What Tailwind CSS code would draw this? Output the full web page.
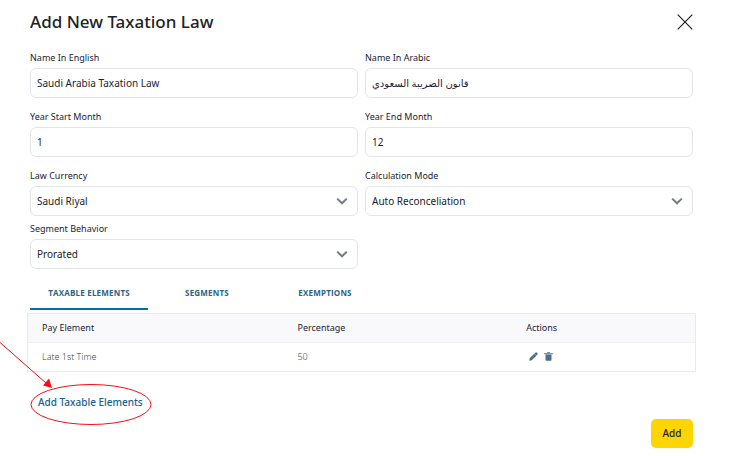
<!DOCTYPE html>
<html lang="en">
<head>
<meta charset="utf-8">
<meta name="viewport" content="width=device-width, initial-scale=1">
<title>Add New Taxation Law</title>
<script src="https://cdn.jsdelivr.net/npm/@tailwindcss/browser@4"></script>
</head>
<body class="bg-white font-['Noto_Sans','Open_Sans','DejaVu_Sans',sans-serif] text-[10px] text-[#1c1c34]">
<main class="overflow-hidden pt-2 pr-10 pb-2 pl-[30px]">
  <header class="flex h-7 items-center justify-between">
    <h1 class="text-[17px] leading-7 font-medium text-[#222]">Add New Taxation Law</h1>
    <button type="button" aria-label="Close" class="text-[#222]">
      <svg class="block size-4" viewBox="0 0 16 16" fill="none" stroke="currentColor" stroke-width="1.2"><path d="M.7.7l14.6 14.6M15.3.7L.7 15.3"/></svg>
    </button>
  </header>

  <form>
    <div class="mt-3 grid grid-cols-2 gap-x-[7px] gap-y-[9px]">
      <div>
        <label for="name-en" class="block text-[9px] leading-5">Name In English</label>
        <input id="name-en" type="text" value="Saudi Arabia Taxation Law" class="block h-[30px] w-full rounded-md border border-[#e2e5e8] px-1.5">
      </div>
      <div>
        <label for="name-ar" class="block text-[9px] leading-5">Name In Arabic</label>
        <input id="name-ar" type="text" value="قانون الضريبة السعودي" class="block h-[30px] w-full rounded-md border border-[#e2e5e8] px-1.5">
      </div>
      <div>
        <label for="start" class="block text-[9px] leading-5">Year Start Month</label>
        <input id="start" type="text" value="1" class="block h-[30px] w-full rounded-md border border-[#e2e5e8] px-1.5">
      </div>
      <div>
        <label for="end" class="block text-[9px] leading-5">Year End Month</label>
        <input id="end" type="text" value="12" class="block h-[30px] w-full rounded-md border border-[#e2e5e8] px-1.5">
      </div>
    </div>
    <div class="mt-[9px] grid grid-cols-2 gap-x-[7px] gap-y-[3px]">
      <div>
        <label for="currency" class="block text-[9px] leading-5">Law Currency</label>
        <div class="relative">
          <select id="currency" class="block h-[30px] w-full appearance-none rounded-md border border-[#e2e5e8] px-1.5 text-[#222]"><option>Saudi Riyal</option></select>
          <svg class="pointer-events-none absolute top-2.5 right-2.5 h-2.5 w-3" viewBox="0 0 12 10" fill="none" stroke="#757b83" stroke-width="2"><path d="M1.2 2.6L6 7.3l4.800-4.700"/></svg>
        </div>
      </div>
      <div>
        <label for="mode" class="block text-[9px] leading-5">Calculation Mode</label>
        <div class="relative">
          <select id="mode" class="block h-[30px] w-full appearance-none rounded-md border border-[#e2e5e8] px-1.5 text-[#222]"><option>Auto Reconceliation</option></select>
          <svg class="pointer-events-none absolute top-2.5 right-2.5 h-2.5 w-3" viewBox="0 0 12 10" fill="none" stroke="#757b83" stroke-width="2"><path d="M1.2 2.6L6 7.3l4.800-4.700"/></svg>
        </div>
      </div>
      <div>
        <label for="segment" class="block text-[9px] leading-5">Segment Behavior</label>
        <div class="relative">
          <select id="segment" class="block h-[30px] w-full appearance-none rounded-md border border-[#e2e5e8] px-1.5 text-[#222]"><option>Prorated</option></select>
          <svg class="pointer-events-none absolute top-2.5 right-2.5 h-2.5 w-3" viewBox="0 0 12 10" fill="none" stroke="#757b83" stroke-width="2"><path d="M1.2 2.6L6 7.3l4.800-4.700"/></svg>
        </div>
      </div>
    </div>

    <div role="tablist" class="mt-[9px] flex font-['Open_Sans','Noto_Sans',sans-serif] text-[8px] font-bold text-[#2a6384]">
      <button type="button" role="tab" aria-selected="true" class="h-8 w-[118px] border-b-2 border-[#04709c] tracking-wide">TAXABLE ELEMENTS</button>
      <button type="button" role="tab" aria-selected="false" class="h-8 w-[118px] border-b-2 border-transparent tracking-wide">SEGMENTS</button>
      <button type="button" role="tab" aria-selected="false" class="h-8 w-[118px] border-b-2 border-transparent tracking-wide">EXEMPTIONS</button>
    </div>

    <div class="-mx-[3px] mt-[3px] border border-[#e8eaf1]">
      <table class="w-full table-fixed text-left text-[9px]">
        <thead class="bg-[#f9f9fc]">
          <tr class="h-7 border-b border-[#eeeff4]">
            <th class="w-[38%] pl-3.5 font-normal">Pay Element</th>
            <th class="w-[34%] pl-4 font-normal">Percentage</th>
            <th class="pl-[18px] font-normal">Actions</th>
          </tr>
        </thead>
        <tbody>
          <tr class="h-[29px] font-light text-[#3c3f56]">
            <td class="pl-3.5">Late 1st Time</td>
            <td class="pl-4">50</td>
            <td class="pl-[21px]">
              <div class="flex items-center gap-1.5 text-[#4a6d8f]">
                <button type="button" aria-label="Edit"><svg class="block size-[9px]" viewBox="0 0 9 9" fill="currentColor"><path d="M.3 8.700l.4-2.400L5.300 1.700l2 2L2.700 8.300zM5.400 1.600l1.200-1.200q.5-.4 1 0l1 1q.4.5 0 1l-1.200 1.200z"/></svg></button>
                <button type="button" aria-label="Delete"><svg class="block size-[9px]" viewBox="0 0 9 9" fill="currentColor"><path d="M3 0h3v1h3v1.200H0V1h3z" opacity=".75"/><path d="M1.500 2.600h6v5.400q0 .8-.8.8H2.300q-.8 0-.8-.8z"/></svg></button>
              </div>
            </td>
          </tr>
        </tbody>
      </table>
    </div>

    <div class="relative mt-5 ml-2 w-fit">
      <a href="#" class="block leading-5 font-medium text-[#17628c]">Add Taxable Elements</a>
      <svg class="pointer-events-none absolute -top-[51px] -left-[38px] h-[84px] w-[152px] max-w-none" viewBox="0 0 152 84" fill="none" stroke="#f80d14">
        <ellipse cx="91" cy="63.500" rx="60" ry="20"/>
        <path d="M0 1.500L46 42"/>
        <path d="M52 47l-9-2.500 6-7z" fill="#f80d14" stroke="none"/>
      </svg>
    </div>

    <div class="mt-[7px] flex justify-end">
      <button type="submit" class="h-[29px] w-[42px] rounded-[5px] bg-[#ffd500] font-medium text-[#222]">Add</button>
    </div>
  </form>
</main>
</body>
</html>
